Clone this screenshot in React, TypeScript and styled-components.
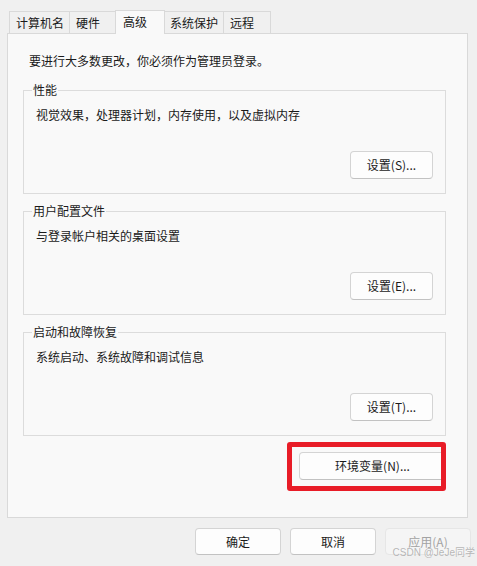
import React from "react";
import styled, { createGlobalStyle } from "styled-components";

const Global = createGlobalStyle`
  html, body { margin: 0; padding: 0; background: #f0f0f0; }
  body { font-family: "Noto Sans CJK SC", "Noto Sans", sans-serif; font-size: 12px; color: #1a1a1a; }
  * { box-sizing: border-box; }
`;

const Window = styled.div`
  position: relative;
  width: 477px;
  height: 566px;
  background: #f0f0f0;
  display: flex;
  flex-direction: column;
  overflow: hidden;
`;

const TabRow = styled.div`
  display: flex;
  align-items: flex-end;
  padding: 10px 0 0 9px;
  height: 34px;
`;

const Tab = styled.div<{ $active?: boolean }>`
  display: flex;
  align-items: center;
  height: ${(p) => (p.$active ? 24 : 23)}px;
  min-width: ${(p) => (p.$active ? 50 : 48)}px;
  padding: ${(p) => (p.$active ? "0 6px 2px 7px" : "0 5px 1px 6px")};
  margin-left: ${(p) => (p.$active ? -2 : -1)}px;
  margin-right: ${(p) => (p.$active ? -1 : 0)}px;
  border: 1px solid #d9d9d9;
  border-bottom: none;
  background: ${(p) => (p.$active ? "#f9f9f9" : "#f0f0f0")};
  font-size: 12px;
  line-height: 16px;
  white-space: nowrap;
  ${(p) => (p.$active ? "position: relative; z-index: 2;" : "")}
  &:first-child { margin-left: 0; }
`;

const Panel = styled.div`
  position: relative;
  z-index: 1;
  margin: -1px 0 0 7px;
  width: 461px;
  height: 485px;
  background: #f9f9f9;
  border: 1px solid #d9d9d9;
  padding: 19px 21px 0 15px;
  display: flex;
  flex-direction: column;
`;

const Intro = styled.div`
  margin-left: 6px;
  line-height: 16px;
  height: 16px;
`;

const Group = styled.fieldset<{ $gap: number }>`
  margin: ${(p) => p.$gap}px 0 0 0;
  padding: 9px 0 13px 0;
  border: 1px solid #dcdcdc;
  height: 112px;
  min-width: 0;
`;

const Legend = styled.legend`
  padding: 0 1px;
  margin-left: 8px;
  line-height: 16px;
  font-size: 12px;
`;

const GroupBody = styled.div`
  padding: 0 12px;
`;

const Desc = styled.div`
  line-height: 16px;
  height: 16px;
`;

const ButtonRow = styled.div<{ $top: number }>`
  display: flex;
  justify-content: flex-end;
  margin-top: ${(p) => p.$top}px;
`;

const Button = styled.button<{ $w: number; $disabled?: boolean; $h?: number }>`
  width: ${(p) => p.$w}px;
  height: ${(p) => p.$h ?? 28}px;
  background: ${(p) => (p.$disabled ? "#f5f5f5" : "#fdfdfd")};
  border: 1px solid ${(p) => (p.$disabled ? "#e6e6e6" : "#d4d4d4")};
  border-bottom-color: ${(p) => (p.$disabled ? "#e6e6e6" : "#c2c2c2")};
  border-radius: 4px;
  font-family: "Noto Sans CJK SC", "Noto Sans", sans-serif;
  font-size: 12px;
  color: ${(p) => (p.$disabled ? "#a3a3a3" : "#1a1a1a")};
  padding: 0;
  line-height: 16px;
`;

const Highlight = styled.div`
  position: relative;
  display: flex;
`;

const RedBox = styled.div`
  position: absolute;
  left: -12px;
  top: -10px;
  right: 0;
  bottom: -11px;
  border: 5px solid #e81c27;
  border-radius: 3px;
  pointer-events: none;
`;

const Footer = styled.div`
  display: flex;
  justify-content: flex-end;
  gap: 9px;
  margin-top: 10px;
  padding-right: 6px;
`;

const Watermark = styled.div`
  position: absolute;
  right: 2px;
  bottom: 7px;
  font-family: "Liberation Sans", "Noto Sans CJK SC", sans-serif;
  font-size: 10px;
  line-height: 12px;
  color: rgba(150, 150, 150, 0.7);
  text-shadow: 0 0 1px rgba(255, 255, 255, 0.8);
  pointer-events: none;
`;

const groups = [
  { title: "性能", desc: "视觉效果，处理器计划，内存使用，以及虚拟内存", btn: "设置(S)...", gap: 13 },
  { title: "用户配置文件", desc: "与登录帐户相关的桌面设置", btn: "设置(E)...", gap: 9 },
  { title: "启动和故障恢复", desc: "系统启动、系统故障和调试信息", btn: "设置(T)...", gap: 9 },
];

const tabs = ["计算机名", "硬件", "高级", "系统保护", "远程"];

export default function App() {
  return (
    <>
      <Global />
      <Window>
        <TabRow>
          {tabs.map((t) => (
            <Tab key={t} $active={t === "高级"}>
              {t}
            </Tab>
          ))}
        </TabRow>
        <Panel>
          <Intro>要进行大多数更改，你必须作为管理员登录。</Intro>
          {groups.map((g) => (
            <Group key={g.title} $gap={g.gap}>
              <Legend>{g.title}</Legend>
              <GroupBody>
                <Desc>{g.desc}</Desc>
                <ButtonRow $top={28}>
                  <Button $w={83}>{g.btn}</Button>
                </ButtonRow>
              </GroupBody>
            </Group>
          ))}
          <ButtonRow $top={16}>
            <Highlight>
              <Button $w={147}>环境变量(N)...</Button>
              <RedBox />
            </Highlight>
          </ButtonRow>
        </Panel>
        <Footer>
          <Button $w={86} $h={27}>确定</Button>
          <Button $w={86} $h={27}>取消</Button>
          <Button $w={86} $h={27} $disabled>应用(A)</Button>
        </Footer>
        <Watermark>CSDN @JeJe同学</Watermark>
      </Window>
    </>
  );
}
